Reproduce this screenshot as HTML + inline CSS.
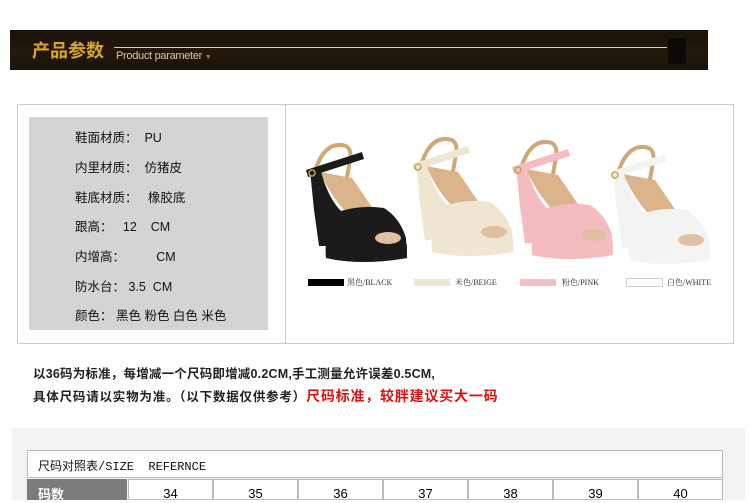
<!DOCTYPE html>
<html><head><meta charset="utf-8"><style>
*{margin:0;padding:0;box-sizing:border-box}
body{width:750px;height:500px;background:#fff;position:relative;overflow:hidden;font-family:"Liberation Sans","Noto Sans CJK SC",sans-serif}
.a{position:absolute}
.hdr{left:10px;top:30px;width:698px;height:40px;background:linear-gradient(180deg,#1a1208,#22190c 50%,#1a130a)}
.spec{font-size:12.5px;color:#111;left:75px}
.lab{font-size:8px;font-family:'Liberation Serif','Noto Serif CJK SC',serif;color:#333}
</style></head><body>
<div class="a hdr"></div>
<div class="a" style="left:668px;top:38px;width:18px;height:26px;background:#0c0906"></div>
<div class="a" style="left:32px;top:37px;font-size:18px;font-weight:bold;color:#d9a52a">产品参数</div>
<div class="a" style="left:114px;top:47px;width:553px;height:1px;background:#e8d27a"></div>
<div class="a" style="left:116px;top:50px;font-size:11px;color:#d8c8a0;letter-spacing:-0.3px">Product parameter <span style="font-size:7px;color:#a08040">▼</span></div>

<div class="a" style="left:17px;top:104px;width:717px;height:240px;border:1px solid #ccc"></div>
<div class="a" style="left:285px;top:105px;width:1px;height:238px;background:#ccc"></div>
<div class="a" style="left:29px;top:117px;width:239px;height:213px;background:#d4d4d4"></div>
<div class="a spec" style="top:127px">鞋面材质：&nbsp; PU</div>
<div class="a spec" style="top:157px">内里材质：&nbsp; 仿猪皮</div>
<div class="a spec" style="top:187px">鞋底材质：&nbsp;&nbsp; 橡胶底</div>
<div class="a spec" style="top:216px">跟高：&nbsp;&nbsp; 12&nbsp;&nbsp;&nbsp; CM</div>
<div class="a spec" style="top:246px">内增高：&nbsp;&nbsp;&nbsp;&nbsp;&nbsp;&nbsp;&nbsp;&nbsp; CM</div>
<div class="a spec" style="top:276px">防水台：&nbsp;3.5&nbsp; CM</div>
<div class="a spec" style="top:305px">颜色：&nbsp;黑色 粉色 白色 米色</div>

<svg class="a" style="left:290px;top:130px" width="440" height="170">
<defs>
<g id="shoe">
<path d="M14 30 Q24 2 44 8 Q50 12 48 22 L44 45" fill="none" stroke="#d0a878" stroke-width="4"/>
<path d="M18 34 Q30 60 44 74 L72 72 L50 40 Z" fill="#dcb48c"/>
<path d="M8 32 L18 30 Q26 62 42 76 L30 80 L27 108 L17 108 L12 72 Z" fill="currentColor"/>
<path d="M30 76 Q55 66 82 70 Q98 80 104 100 L105 120 Q60 128 24 120 Q22 100 30 76Z" fill="currentColor"/>
<ellipse cx="86" cy="100" rx="13" ry="6" fill="#e0c0a0"/>
<path d="M24 110 Q60 112 105 106 L105 120 Q60 128 24 120Z" fill="currentColor" opacity="0.85"/>
<path d="M4 32 L60 14 L62 21 L6 39Z" fill="currentColor"/>
<circle cx="10" cy="35" r="3" fill="none" stroke="#c9a24a" stroke-width="1.5"/>
</g>
</defs>
<use href="#shoe" x="12" y="8" style="color:#1b1b1b"/>
<use href="#shoe" x="118" y="2" style="color:#efe6d2"/>
<use href="#shoe" x="218" y="5" style="color:#f4bcc0"/>
<use href="#shoe" x="315" y="10" style="color:#f3f3f3"/>
</svg>
<div class="a" style="left:308px;top:279px;width:36px;height:7px;background:#000"></div>
<div class="a lab" style="left:347px;top:277px">黑色/BLACK</div>
<div class="a" style="left:414px;top:279px;width:36px;height:7px;background:#efe7d4"></div>
<div class="a lab" style="left:455px;top:277px">米色/BEIGE</div>
<div class="a" style="left:520px;top:279px;width:36px;height:7px;background:#f5c0c2"></div>
<div class="a lab" style="left:562px;top:277px">粉色/PINK</div>
<div class="a" style="left:626px;top:278px;width:37px;height:9px;border:1px solid #ccc"></div>
<div class="a lab" style="left:667px;top:277px">白色/WHITE</div>

<div class="a" style="left:33px;top:363px;font-size:12.5px;font-weight:bold;color:#222;letter-spacing:0.2px">以36码为标准，每增减一个尺码即增减0.2CM,手工测量允许误差0.5CM,</div>
<div class="a" style="left:33px;top:386px;font-size:12.5px;font-weight:bold;color:#222;letter-spacing:0.8px;white-space:nowrap">具体尺码请以实物为准。（以下数据仅供参考）<span style="color:#e01010;font-size:14px;letter-spacing:0.8px">尺码标准，较胖建议买大一码</span></div>

<div class="a" style="left:12px;top:428px;width:733px;height:72px;background:#f2f2f2"></div>
<div class="a" style="left:27px;top:450px;width:696px;height:28px;border:1px solid #bbb;background:#fff"></div>
<div class="a" style="left:38px;top:457px;font-size:12px;color:#111;font-family:'Liberation Mono','Noto Sans CJK SC',monospace">尺码对照表/SIZE&nbsp; REFERNCE</div>
<div class="a" style="left:27px;top:479px;width:100px;height:21px;background:#7b7b7b"></div>
<div class="a" style="left:38px;top:484px;font-size:13px;font-weight:bold;color:#fff">码数</div>
<div class="a" style="left:128px;top:479px;width:595px;height:21px;display:flex;background:#fff">
<div style="flex:1;border:1px solid #bbb;text-align:center;font-size:13px;padding-top:6px">34</div><div style="flex:1;border:1px solid #bbb;text-align:center;font-size:13px;padding-top:6px">35</div><div style="flex:1;border:1px solid #bbb;text-align:center;font-size:13px;padding-top:6px">36</div><div style="flex:1;border:1px solid #bbb;text-align:center;font-size:13px;padding-top:6px">37</div><div style="flex:1;border:1px solid #bbb;text-align:center;font-size:13px;padding-top:6px">38</div><div style="flex:1;border:1px solid #bbb;text-align:center;font-size:13px;padding-top:6px">39</div><div style="flex:1;border:1px solid #bbb;text-align:center;font-size:13px;padding-top:6px">40</div>
</div>
</body></html>
